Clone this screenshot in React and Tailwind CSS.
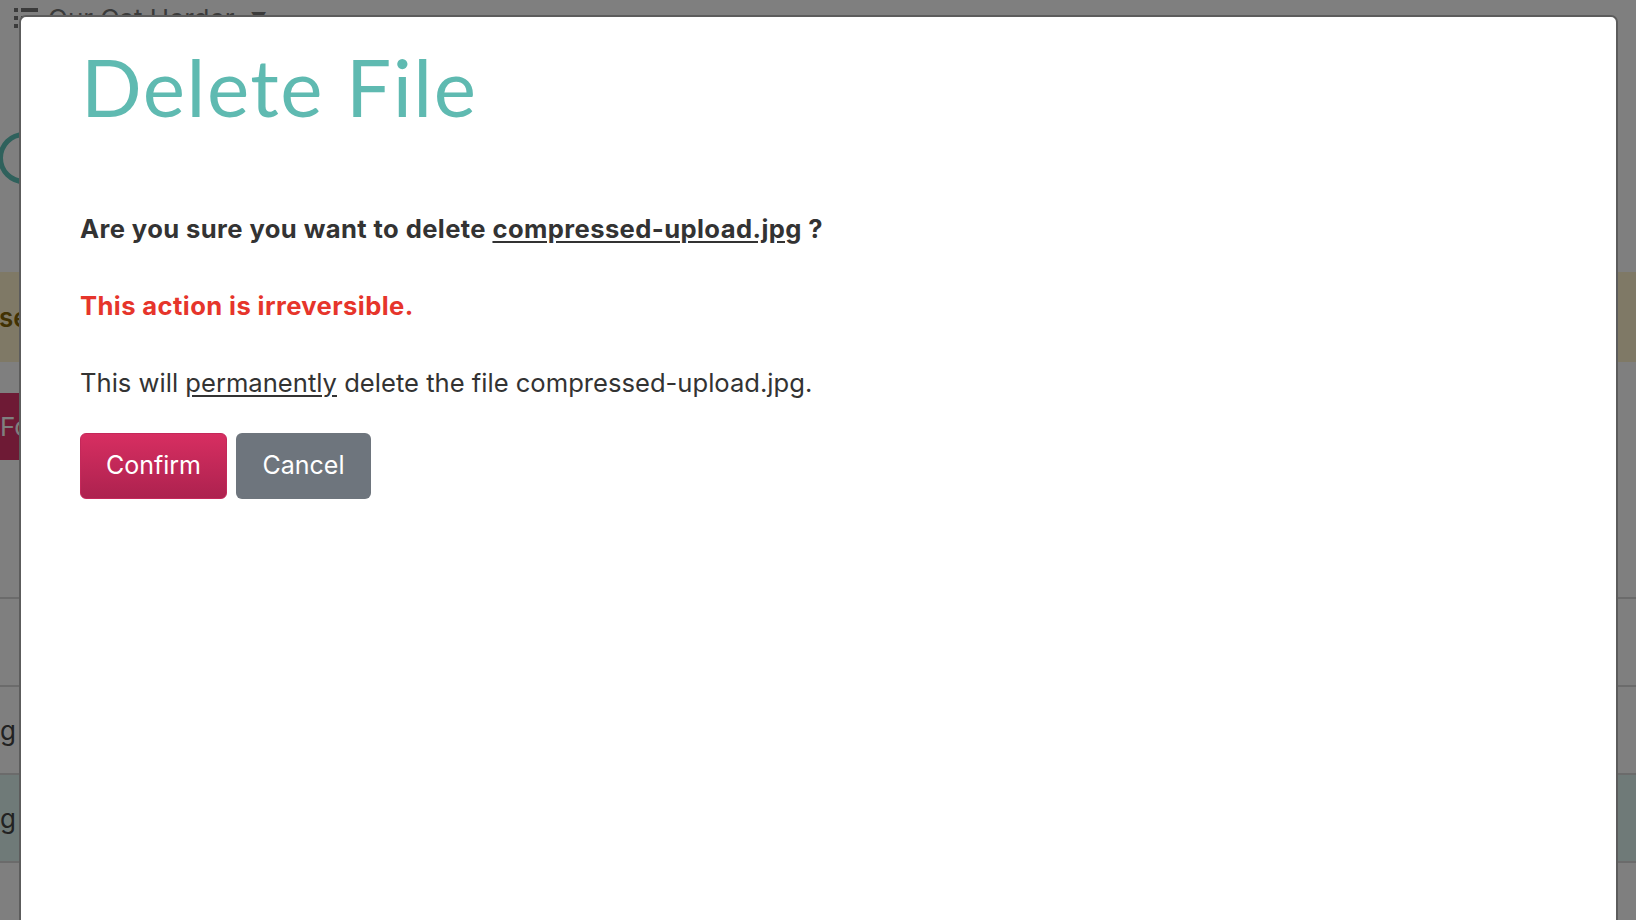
import React from 'react';

const BackgroundPage = () => (
  <div className="absolute inset-0 bg-white font-['Inter',sans-serif] text-[#444]">
    {/* Top nav */}
    <div className="flex items-center gap-[10px] h-[36px] pl-[14px]">
      <svg width="24" height="22" viewBox="0 0 24 22" className="text-[#777]">
        <rect x="0" y="1" width="4" height="4" fill="currentColor" />
        <rect x="7" y="1" width="17" height="4" fill="currentColor" />
        <rect x="0" y="9" width="4" height="4" fill="currentColor" />
        <rect x="7" y="9" width="17" height="4" fill="currentColor" />
        <rect x="0" y="17" width="4" height="4" fill="currentColor" />
        <rect x="7" y="17" width="17" height="4" fill="currentColor" />
      </svg>
      <span className="text-[26px] text-[#777]">Our Cat Herder</span>
      <span className="text-[16px] text-[#777] ml-[6px]">▼</span>
    </div>

    {/* Logo arc */}
    <div className="h-[236px] relative">
      <div className="absolute left-[-2px] top-[96px] w-[52px] h-[52px] rounded-full border-[5px] border-[#5fc2b8]" />
    </div>

    {/* Warning band */}
    <div className="h-[90px] bg-[#fff3cd] flex items-center">
      <span className="text-[26px] font-semibold text-[#856404] ml-[-16px]">ase</span>
    </div>

    {/* Button */}
    <div className="pt-[31px] h-[165px]">
      <div className="ml-[-20px] w-[180px] h-[67px] bg-[#dc356b] rounded-[6px] flex items-center pl-[20px] text-white text-[26px]">
        Folder
      </div>
    </div>

    {/* Table */}
    <div className="ml-[-60px] text-[26px] font-bold text-[#999] h-[70px]">Files</div>
    <div className="border-t-2 border-[#d6d6d6] h-[88px]" />
    <div className="border-t-2 border-[#d6d6d6] h-[88px] flex items-center">
      <span className="ml-[-150px] text-[26px] text-[#444]">cat-photo.jpg</span>
    </div>
    <div className="border-t-2 border-[#d6d6d6] h-[88px] bg-[#dff5f1] flex items-center">
      <span className="ml-[-150px] text-[26px] text-[#444]">cat-photo.jpg</span>
    </div>
    <div className="border-t-2 border-[#d6d6d6] h-[88px]" />
  </div>
);

export default function App() {
  return (
    <div className="relative w-full h-[920px] overflow-hidden">
      <BackgroundPage />
      <div className="absolute inset-0 bg-black/50" />

      {/* Modal */}
      <div className="absolute left-[19px] right-[18px] top-[15px] bottom-[-20px] bg-white rounded-[7px] border-2 border-[#5c5c5c]">
        <div className="pl-[59px] pt-[21px]">
          <h1 className="font-['Lato',sans-serif] font-normal text-[80px] leading-[96px] text-[#5fbab1] tracking-[1.5px] ml-[1px]">
            Delete File
          </h1>

          <div className="mt-[77px] font-['Inter',sans-serif] text-[25.6px] leading-[36px] text-[#333]">
            <p className="font-bold tracking-[0.4px] mb-[41px]">
              Are you sure you want to delete <span className="underline underline-offset-[3px]">compressed-upload.jpg</span> ?
            </p>
            <p className="font-bold tracking-[0.4px] text-[#e6352b] mb-[41px]">This action is irreversible.</p>
            <p className="mb-[32px]">
              This will <span className="underline underline-offset-[3px]">permanently</span> delete the file compressed-upload.jpg.
            </p>
          </div>

          <div className="flex gap-[9px] font-['Inter',sans-serif] text-[25px] text-white">
            <button className="w-[147px] h-[66px] rounded-[6px] bg-gradient-to-b from-[#d72e61] to-[#ad224f] border border-[#c4285a]">
              Confirm
            </button>
            <button className="w-[135px] h-[66px] rounded-[6px] bg-[#6e757d]">
              Cancel
            </button>
          </div>
        </div>
      </div>
    </div>
  );
}
